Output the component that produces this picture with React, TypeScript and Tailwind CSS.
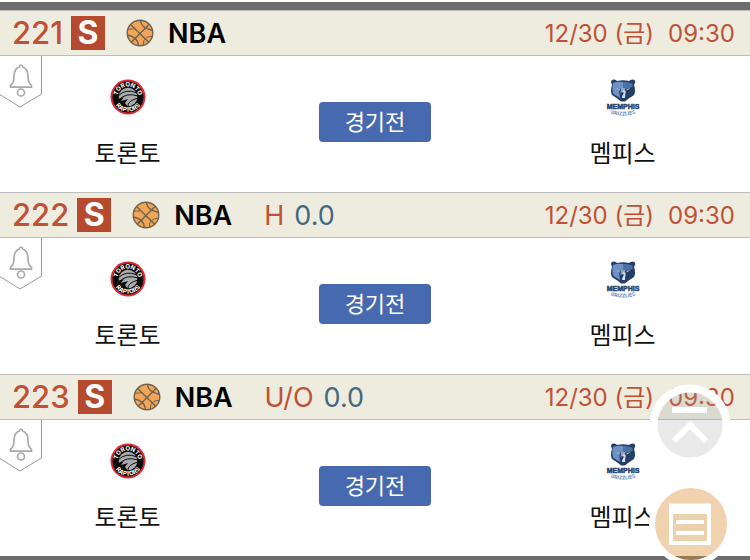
const inter = "font-['Inter','Noto_Sans_CJK_KR',sans-serif]";

type Game = { no: string; label?: string; value?: string };

const games: Game[] = [
  { no: "221" },
  { no: "222", label: "H", value: "0.0" },
  { no: "223", label: "U/O", value: "0.0" },
];

function Basketball() {
  return (
    <svg viewBox="0 0 28 28" className="size-7 shrink-0" fill="none" stroke="#6b6354" strokeWidth="1.4" aria-hidden="true">
      <circle cx="14" cy="14" r="12.8" fill="#f3a556" />
      <path d="M4.5 5.5 L23 23.5 M23.5 5 L5 23.5" />
      <path d="M14.5 1.5 Q15 9 26.5 11.5 M1.5 16 Q12 18 12.5 26.5" />
      <path d="M2 10 Q6 10.5 9 9.5 M17.5 26 Q17 21 19.5 19.5 Q22 17 26.5 17.5" strokeWidth="1" />
    </svg>
  );
}

function Bell() {
  return (
    <svg viewBox="0 0 42 52" className="h-[52px] w-[42px]" fill="none" aria-hidden="true">
      <path d="M41.5 0 V38 L20 51 L-1 38" fill="#fff" stroke="#999" />
      <g stroke="#aaa" strokeWidth="1.7" strokeLinejoin="round">
        <path d="M21 9 Q19.6 9 19.4 11 C15.5 12.2 14.2 15.5 14 20 C13.9 25 13.5 26.5 10.5 29.3 V31.2 H31.5 V29.3 C28.5 26.5 28.1 25 28 20 C27.8 15.5 26.5 12.2 22.6 11 Q22.4 9 21 9Z" />
        <circle cx="21" cy="36.5" r="3.5" />
      </g>
    </svg>
  );
}

function Raptors({ id }: { id: string }) {
  return (
    <svg viewBox="0 0 36 36" className="size-9" role="img" aria-label="Toronto Raptors">
      <circle cx="18" cy="18" r="17.5" fill="#dc2a35" />
      <circle cx="18" cy="18" r="15.5" fill="#0b0b0b" />
      <circle cx="18" cy="18" r="9.3" fill="#a9abad" />
      <g fill="none" stroke="#0b0b0b" strokeWidth="1">
        <path d="M8 17 Q16 9 27 14 M9 21 Q16 13 28 17 M18 28 Q17 22 28 19" />
      </g>
      <path d="M8 20 L14 18 L11 22 L18 20 L15 24 L18 28 L9 27Z" fill="#0b0b0b" />
      <path id={`${id}-top`} d="M7.5 18 A10.5 10.5 0 0 1 28.5 18" fill="none" />
      <path id={`${id}-bottom`} d="M3.2 18 A14.8 14.8 0 0 0 32.8 18" fill="none" />
      <g fill="#fff" className="font-['Inter',sans-serif] text-[6px] font-bold" textAnchor="middle">
        <text><textPath href={`#${id}-top`} startOffset="50%">TORONTO</textPath></text>
        <text><textPath href={`#${id}-bottom`} startOffset="50%">RAPTORS</textPath></text>
      </g>
    </svg>
  );
}

function Grizzlies({ id }: { id: string }) {
  return (
    <svg viewBox="0 0 36 40" className="h-10 w-9" role="img" aria-label="Memphis Grizzlies">
      <path d="M6 3 Q6 0 9 0.5 Q11 0.5 12 2 Q18 0.5 24 2 Q25 0.5 28 0.5 Q31 1 30 4 L29 6 Q31 12 29 16 L23 20 L20 22.5 H16 L13 20 L7 16 Q5 12 7 6Z" fill="#233e6b" />
      <path d="M8 4 Q13 2 18 3 L18 9 L14 10 L15 19 L8.5 15 Q6.500 11 8 4Z" fill="#6f92c4" />
      <path d="M18 3 Q23 2.5 27.5 4.5 L27.5 8 L21 10 L18 9Z" fill="#4a70a8" />
      <path d="M16 9 H20 L20.5 14 L18 16 L15.5 14Z" fill="#8aa6cc" />
      <path d="M18 11 L20.5 12 L20 19 L17 19Z" fill="#d5deea" />
      <path d="M15.5 13.5 H19 L17.5 16.5Z" fill="#1b2c4c" />
      <path d="M12 9.5 L15 11 M24.5 9.5 L21.5 11" stroke="#e0b95c" />
      <path id={`${id}-arc`} d="M3 33.5 Q18 39.5 33 33.5" fill="none" />
      <g textAnchor="middle">
        <text x="18" y="30" className="font-['Liberation_Sans',sans-serif] text-[7px] font-bold" fill="#29436e" stroke="#29436e" strokeWidth="0.5">MEMPHIS</text>
        <text fill="#6388b8" className="font-['Inter',sans-serif] text-[5px] font-bold"><textPath href={`#${id}-arc`} startOffset="50%">GRIZZLIES</textPath></text>
      </g>
    </svg>
  );
}

function GameRow({ no, label, value }: Game) {
  return (
    <article>
      <header className="flex h-[46px] items-center border-y border-[#bdbdbd] bg-[#eeecdf] pr-[15px] pl-3">
        <span className="text-[31px] font-medium text-[#c15136]">{no}</span>
        <span className="ml-2 flex size-[34px] items-center justify-center bg-[#b64a2f] text-[32px] font-bold text-white">S</span>
        <span className="ml-[21px] flex"><Basketball /></span>
        <h2 className="ml-3.5 pt-0.5 text-[27px] font-semibold text-black">NBA</h2>
        {label && (
          <p className="ml-8 flex gap-2.5 pt-0.5 text-[27px] font-normal">
            <span className="text-[#c15136]">{label}</span>
            <span className="text-[#45677c]">{value}</span>
          </p>
        )}
        <time className="ml-auto flex gap-3.5 pt-0.5 text-2xl text-[#c15136]">
          <span>12/30 (금)</span>
          <span>09:30</span>
        </time>
      </header>
      <div className="relative grid h-[136px] grid-cols-[17fr_16fr_17fr] bg-white">
        <button type="button" aria-label="알림" className="absolute top-0 left-0"><Bell /></button>
        <div className="flex flex-col items-center pt-[23px]">
          <div className="h-10"><Raptors id={`raptors-${no}`} /></div>
          <p className="mt-[17px] text-2xl leading-9 text-[#111]">토론토</p>
        </div>
        <div className="flex items-center justify-center pb-1">
          <button type="button" className="h-10 w-28 rounded bg-[#4769b0] text-[22px] text-white">경기전</button>
        </div>
        <div className="flex flex-col items-center pt-[23px]">
          <Grizzlies id={`grizzlies-${no}`} />
          <p className="mt-[17px] text-2xl leading-9 text-[#111]">멤피스</p>
        </div>
      </div>
    </article>
  );
}

export default function App() {
  return (
    <main className={`${inter} bg-white pt-0.5`}>
      <div className="h-2 bg-[#6c6c6c]" />
      {games.map((game) => <GameRow key={game.no} {...game} />)}
      <div className="h-1 bg-[#6c6c6c]" />
      <nav className="fixed right-[17px] -bottom-1.5 flex flex-col gap-4">
        <button type="button" aria-label="맨 위로" className="size-[82px]">
          <svg viewBox="0 0 82 82" fill="none" stroke="#fff" aria-hidden="true">
            <circle cx="41" cy="41" r="33" fill="#999" fillOpacity="0.22" stroke="none" />
            <circle cx="41" cy="41" r="36.5" strokeWidth="8" />
            <path d="M23 26 H58 M25 57 L41 41 L57 57" strokeWidth="6" />
          </svg>
        </button>
        <button type="button" aria-label="목록" className="size-[84px]">
          <svg viewBox="0 0 84 84" fill="none" stroke="#fff" aria-hidden="true">
            <circle cx="42" cy="42" r="36.5" fill="#d98f35" fillOpacity="0.4" stroke="none" />
            <circle cx="42" cy="42" r="39" strokeWidth="6" />
            <path d="M20 21.5 H62 V63 H20Z" stroke="none" fill="#fff" />
            <path d="M24 32 H58 V59 H24Z" stroke="none" fill="#ecd1ad" />
            <path d="M27 40 H55 M27 51 H55" strokeWidth="4" />
          </svg>
        </button>
      </nav>
    </main>
  );
}
